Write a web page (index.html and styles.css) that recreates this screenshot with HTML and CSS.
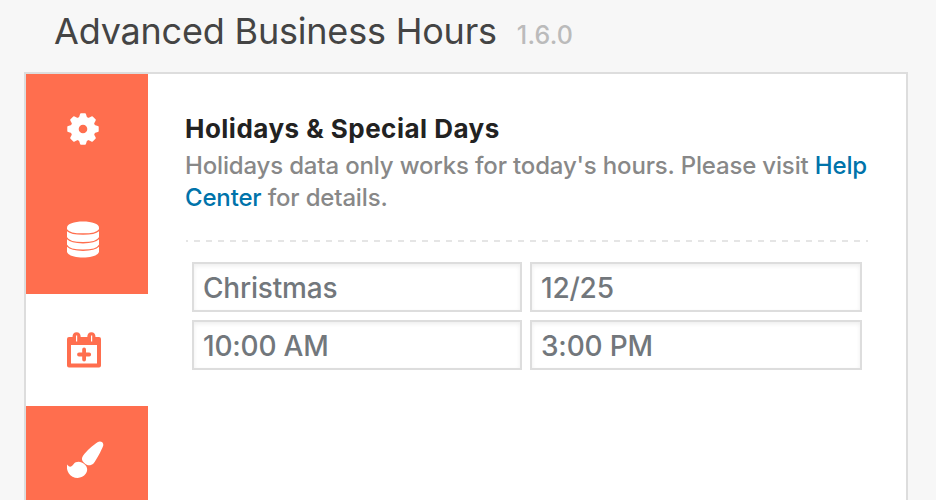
FILE: index.html
```html
<!DOCTYPE html>
<html lang="en">
<head>
  <meta charset="UTF-8" />
  <meta name="viewport" content="width=device-width, initial-scale=1" />
  <title>Advanced Business Hours</title>
  <link rel="stylesheet" href="styles.css">
</head>
<body>
  <header class="page-header">
    <h1>Advanced Business Hours</h1>
    <span class="version">1.6.0</span>
  </header>

  <div class="panel">
    <!-- Sidebar tabs -->
    <nav class="tabs">
      <a class="tab" href="#" aria-label="Settings">
        <svg width="32" height="32" viewBox="0 0 32 32" fill="currentColor">
          <circle cx="16" cy="16" r="8.4" fill="none" stroke="currentColor" stroke-width="8.2" />
          <g id="teeth">
            <path d="M11.500 6L13 1.200Q13.200 .3 14 .3h4q.8 0 1 .9L20.500 6z" />
            <path d="M11.500 6L13 1.200Q13.200 .3 14 .3h4q.8 0 1 .9L20.500 6z" transform="rotate(90 16 16)" />
            <path d="M11.500 6L13 1.200Q13.200 .3 14 .3h4q.8 0 1 .9L20.500 6z" transform="rotate(180 16 16)" />
            <path d="M11.500 6L13 1.200Q13.200 .3 14 .3h4q.8 0 1 .9L20.500 6z" transform="rotate(270 16 16)" />
          </g>
          <use href="#teeth" transform="rotate(45 16 16)" />
        </svg>
      </a>
      <a class="tab" href="#" aria-label="Data">
        <svg width="32" height="37" viewBox="0 0 32 37" fill="currentColor">
          <path d="M0 6.5C0 3 7 .5 16 .5s16 2.500 16 6v24c0 3.500-7 6-16 6s-16-2.500-16-6z" />
          <path class="disk-line" d="M-.5 8.500C3 14.500 29 14.500 32.500 8.500M-.5 16.500C3 23.500 29 23.500 32.500 16.500M-.5 24C3 31 29 31 32.500 24" />
        </svg>
      </a>
      <a class="tab active" href="#" aria-label="Holidays">
        <svg width="34" height="36" viewBox="0 0 34 36" fill="currentColor">
          <path fill-rule="evenodd" d="M2 5h3.500C5.500 2 7 .3 9.600 .3S13.700 2 13.700 5h6.600c0-3 1.500-4.700 4.100-4.700S28.500 2 28.500 5H32q2 0 2 2v26.500q0 2-2 2H2q-2 0-2-2V7q0-2 2-2zM4 13v18.500h26V13zM9 3.500v6h1.200v-6zM24 3.500v6h1.200v-6z" />
          <path d="M17.100 17.500v10M12 22.500h10.200" stroke="currentColor" stroke-width="3.800" stroke-linecap="round" />
        </svg>
      </a>
      <a class="tab" href="#" aria-label="Style">
        <svg width="37" height="37" viewBox="0 0 37 37" fill="currentColor">
          <path d="M30.500 1.200C33.500-.8 37.500 1.500 36 5.200C34 10 30 18 26.500 22.500C24 25 20 24.800 17.800 22.500C14.800 20.200 14 17.500 16.200 14.500C19.500 10 26 4 30.500 1.200z" />
          <path d="M.3 23.500C2.500 27 4.500 26 6.500 23.200C9 19.800 14.500 20.300 17.500 23.300C21 26.300 20.700 30 18.700 32.800C16 37 10 38 5.500 35.700C1 33.200 -1 28 .3 23.500z" />
        </svg>
      </a>
    </nav>

    <!-- Holidays form -->
    <main class="content">
      <h2>Holidays &amp; Special Days</h2>
      <p>Holidays data only works for today's hours. Please visit <a href="#">Help Center</a> for details.</p>
      <hr class="divider">
      <form class="holiday">
        <input type="text" placeholder="Christmas" />
        <input type="text" placeholder="12/25" />
        <input type="text" placeholder="10:00 AM" />
        <input type="text" placeholder="3:00 PM" />
      </form>
    </main>
  </div>
</body>
</html>
```
FILE: styles.css
```css
* {
  margin: 0;
  padding: 0;
  box-sizing: border-box;
}

body {
  background: #f7f7f7;
  height: 500px;
  overflow: hidden;
  font-family: 'Inter', sans-serif;
}

.page-header {
  display: flex;
  align-items: baseline;
  height: 72px;
  padding: 9px 0 0 54px;
}

h1 {
  font-size: 36px;
  line-height: 44px;
  font-weight: 430;
  letter-spacing: -0.2px;
  color: #444;
}

.version {
  margin-left: 20px;
  font-size: 25px;
  font-weight: 500;
  letter-spacing: 0.2px;
  color: #bbb;
}

.panel {
  display: flex;
  width: 884px;
  height: 428px;
  margin-left: 24px;
  background: #fff;
  border: 2px solid #ddd;
  border-bottom: none;
}

.tabs {
  width: 122px;
  background: #ff6e4e;
}

.tab {
  display: flex;
  align-items: center;
  height: 110px;
  padding-left: 41px;
  color: #fff;
}

.tab.active {
  height: 112px;
  background: #fff;
  color: #ff6e4e;
}

/* cut off by the bottom of the panel */
.tab:last-child {
  height: 94px;
  padding-top: 13px;
}

.disk-line {
  fill: none;
  stroke: #ff6e4e;
  stroke-width: 1.3;
}

.content {
  flex: 1;
  padding: 38px 38px 0;
}

h2 {
  font-size: 26px;
  line-height: 34px;
  font-weight: 700;
  letter-spacing: 0.48px;
  margin-left: -1px;
  color: #222;
  white-space: nowrap;
}

p {
  font-size: 24px;
  line-height: 32px;
  font-weight: 450;
  letter-spacing: -0.165px;
  margin: 4px -4px 0 -1px;
  color: #888;
}

p a {
  color: #0073aa;
  text-decoration: none;
}

.divider {
  height: 2px;
  margin: 26px 0 20px;
  border: none;
  background: repeating-linear-gradient(to right, #e5e5e5 0 6px, transparent 6px 12px) -4px 0 / 696px 2px;
}

.holiday {
  display: grid;
  grid-template-columns: 330px 332px;
  gap: 8px;
  padding-left: 6px;
}

.holiday input {
  width: 100%;
  height: 50px;
  padding: 1px 9px 0;
  border: 2px solid #ddd;
  box-shadow: inset 0 2px 4px rgba(0, 0, 0, 0.07);
  background: #fff;
  font-family: inherit;
  font-size: 28px;
  font-weight: 450;
  letter-spacing: -0.2px;
}

.holiday input::placeholder {
  color: #72777c;
}
```
